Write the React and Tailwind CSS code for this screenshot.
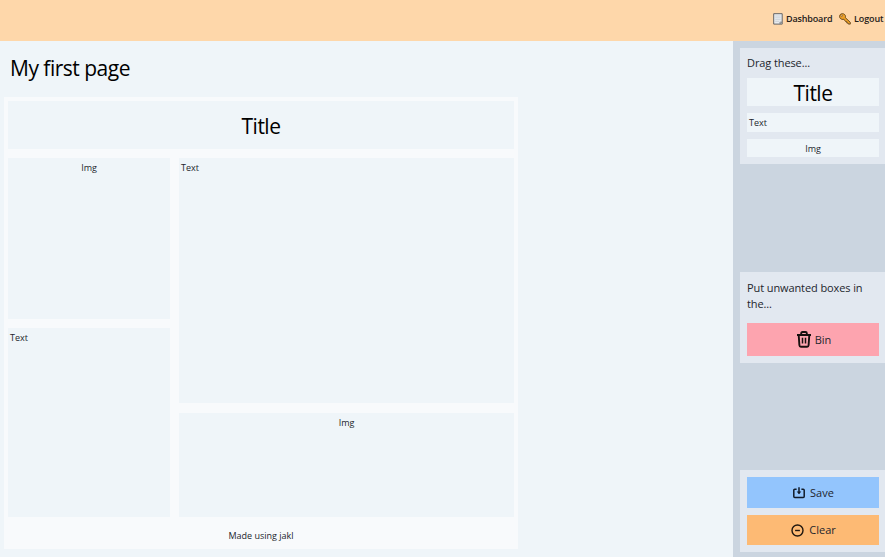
import React from "react";

const heading = "text-[21px] leading-[28px] text-black font-normal tracking-[-0.5px]";
const small = "text-[9px] leading-[12px] text-[#23262d]";

function Block({ label, kind, className }) {
  const align = kind === "text" ? "text-left pl-[2px]" : "text-center";
  return (
    <div className={`bg-[#eff5f9] pt-[4px] ${small} ${align} ${className}`}>{label}</div>
  );
}

function PageIcon() {
  return (
    <svg width="10" height="12" viewBox="0 0 10 12" className="shrink-0">
      <path d="M.7.7h8.500v10.400H.7z" fill="#e9ecef" stroke="#55565a" strokeWidth=".9" />
      <path d="M2.200 3h5.500M2.200 4.800h5.500M2.200 6.600h5.500M2.200 8.400h4" stroke="#bcc3ca" strokeWidth=".6" />
      <path d="M6.900 11V9H9z" fill="#c4c8cc" stroke="#65676a" strokeWidth=".5" />
    </svg>
  );
}

function KeyIcon() {
  return (
    <svg width="12" height="12" viewBox="0 0 12 12" className="shrink-0">
      <path
        d="M1.200 1.600C2.300.3 4.500.3 5.700 1.600c.9.9 1 2 .6 3l5 4.700v1.800H9.400L8.900 10H7.800V8.700L6.500 8.500 4.900 6.200c-1.200.5-2.600.2-3.600-.8C.3 4.300.3 2.600 1.200 1.600z"
        fill="#eda028"
        stroke="#5b3d15"
        strokeWidth=".85"
        strokeLinejoin="round"
      />
      <circle cx="2.700" cy="2.700" r=".85" fill="#fed7aa" stroke="#5b3d15" strokeWidth=".5" />
    </svg>
  );
}

function BinIcon() {
  return (
    <svg width="14" height="17" viewBox="0 0 14 17" fill="none" stroke="#17100f" strokeWidth="1.900" strokeLinejoin="round" className="shrink-0">
      <path d="M0 4h14M4.200 3.800V2.300Q4.200 1 5.500 1h3Q9.800 1 9.800 2.300v1.500" />
      <path d="M1.700 4l.7 10.200q.1 1.500 1.500 1.500h6.200q1.400 0 1.500-1.500L12.300 4" />
      <path d="M5.500 6.800v5.800M8.500 6.800v5.800" strokeWidth="1.500" />
    </svg>
  );
}

function SaveIcon() {
  return (
    <svg width="12" height="12" viewBox="0 0 12 12" fill="none" stroke="#101a28" strokeWidth="1.500" className="shrink-0">
      <path d="M3.600 2.200H1.800Q.8 2.200.8 3.200v6.400q0 1 1 1h8.400q1 0 1-1V3.200q0-1-1-1H8.400" />
      <path d="M6 .2v6.300" />
      <path d="M3.700 4.500h4.600L6 7.300z" fill="#101a28" stroke="none" />
    </svg>
  );
}

function ClearIcon() {
  return (
    <svg width="13" height="13" viewBox="0 0 13 13" fill="none" stroke="#20170f" strokeWidth="1.400" className="shrink-0">
      <circle cx="6.500" cy="6.500" r="5.500" />
      <path d="M4.100 6.500h4.800" />
    </svg>
  );
}

export default function App() {
  return (
    <div className="flex h-[557px] w-[885px] flex-col overflow-hidden bg-[#eff5f9] font-['Open_Sans','Noto_Sans',sans-serif]">
      <header className="flex h-[41px] shrink-0 items-center justify-end bg-[#fed7aa] pb-[4px] pr-[1px] text-[9px] font-semibold text-[#252019]">
        <a className="flex items-center gap-[3px]">
          <PageIcon />
          <span className="w-[46px] whitespace-nowrap tracking-[-0.15px]">Dashboard</span>
        </a>
        <a className="ml-[7px] flex items-center gap-[3px]">
          <KeyIcon />
          <span className="w-[30px] whitespace-nowrap tracking-[-0.1px]">Logout</span>
        </a>
      </header>

      <div className="flex min-h-0 grow">
        <main className="w-[733px] pl-[4px]">
          <h1 className={`h-[56px] pl-[6px] pt-[13px] ${heading}`}>My first page</h1>
          <section className="flex h-[452px] w-[514px] flex-col bg-[#f8fafc] px-[4px] pt-[4px]">
            <div className={`flex h-[48px] items-center justify-center bg-[#eff5f9] pt-[2px] ${heading}`}>Title</div>
            <div className="mt-[8.500px] flex h-[359px] justify-between">
              <div className="flex w-[162px] flex-col justify-between">
                <Block label="Img" kind="image" className="h-[161px]" />
                <Block label="Text" kind="text" className="h-[188.500px]" />
              </div>
              <div className="flex w-[335px] flex-col justify-between">
                <Block label="Text" kind="text" className="h-[245.500px]" />
                <Block label="Img" kind="image" className="h-[104px]" />
              </div>
            </div>
            <footer className={`pt-[13px] text-center ${small}`}>Made using jakl</footer>
          </section>
        </main>

        <aside className="flex w-[152px] flex-col justify-between bg-[#cbd5e0] pb-[5px] pl-[7px] pt-[7px] text-[11px] text-[#23262d]">
          <div className="h-[116px] bg-[#e2e8f0] pl-[7px] pr-[6px] pt-[7px]">
            <p className="leading-[16px] tracking-[-0.1px]">Drag these...</p>
            <div className={`mt-[7px] flex h-[28px] items-center justify-center bg-[#eff5f9] pt-[2px] ${heading}`}>Title</div>
            <Block label="Text" kind="text" className="mt-[7px] h-[18.500px]" />
            <Block label="Img" kind="image" className="mt-[7px] h-[18.500px]" />
          </div>
          <div className="h-[91px] bg-[#e2e8f0] pl-[7px] pr-[6px] pt-[8px]">
            <p className="leading-[16.500px] tracking-[-0.1px]">
              Put unwanted boxes in
              <br />
              the...
            </p>
            <div className="mt-[10.500px] flex h-[32.500px] items-center justify-center gap-[4px] bg-[#fda4af] pl-[2px] pt-[1px]">
              <BinIcon />
              <span>Bin</span>
            </div>
          </div>
          <div className="h-[82px] bg-[#e2e8f0] pl-[7px] pr-[6px] pt-[7px]">
            <button className="flex h-[30.500px] w-full items-center justify-center gap-[5px] bg-[#93c5fd] pl-[1px] pt-[1px]">
              <SaveIcon />
              <span>Save</span>
            </button>
            <button className="mt-[7px] flex h-[30.500px] w-full items-center justify-center gap-[5px] bg-[#fdba74] pl-[1px] pt-[1px]">
              <ClearIcon />
              <span>Clear</span>
            </button>
          </div>
        </aside>
      </div>
    </div>
  );
}
